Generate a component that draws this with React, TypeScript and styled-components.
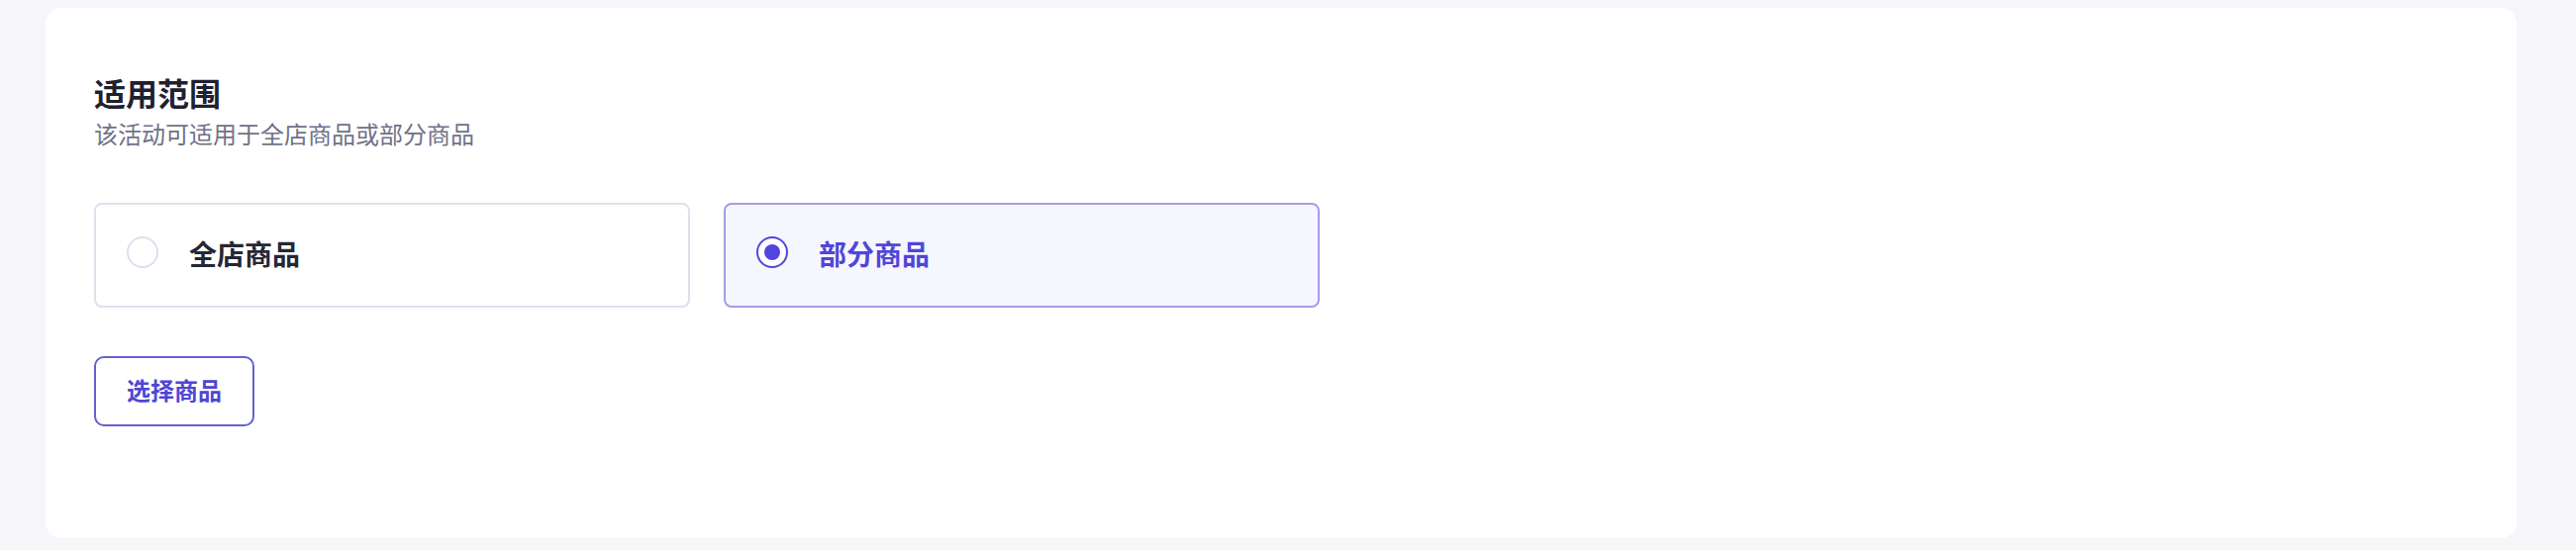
import { useState } from 'react'
import styled, { createGlobalStyle } from 'styled-components'

const GlobalStyle = createGlobalStyle`
  html, body {
    margin: 0;
    padding: 0;
    background: #f6f6fa;
  }
  body {
    font-family: Inter, "Noto Sans CJK SC", "Noto Sans", sans-serif;
  }
  * {
    box-sizing: border-box;
  }
`

const Page = styled.div`
  padding: 8px 60px 12px 46px;
`

const Card = styled.section`
  background: #ffffff;
  border-radius: 16px;
  padding: 68px 49px 113px;
`

const Title = styled.h2`
  margin: 0 0 5px;
  font-size: 32px;
  line-height: 40px;
  font-weight: 600;
  color: #1f2130;
`

const Subtitle = styled.p`
  margin: 0;
  font-size: 24px;
  line-height: 32px;
  color: #6f7187;
`

const Options = styled.div`
  display: grid;
  grid-template-columns: 602px 602px;
  gap: 34px;
  margin-top: 52px;
`

const Option = styled.button<{ $active: boolean }>`
  display: flex;
  align-items: center;
  gap: 31px;
  height: 106px;
  padding: 0 31px;
  border: 2px solid ${(p) => (p.$active ? '#a19de9' : '#dfe0ec')};
  border-radius: 8px;
  background: ${(p) => (p.$active ? '#f6f6ff' : '#ffffff')};
  font-family: inherit;
  font-size: 28px;
  line-height: 36px;
  font-weight: 600;
  color: ${(p) => (p.$active ? '#4f46d8' : '#252733')};
  cursor: pointer;
  text-align: left;
`

const Radio = styled.span<{ $active: boolean }>`
  display: flex;
  align-items: center;
  justify-content: center;
  flex: none;
  width: 32px;
  height: 32px;
  margin-top: -6px;
  border-radius: 50%;
  border: 2px solid ${(p) => (p.$active ? '#4f46d8' : '#dde0ec')};
  background: #ffffff;
  &::after {
    content: '';
    display: ${(p) => (p.$active ? 'block' : 'none')};
    width: 16px;
    height: 16px;
    border-radius: 50%;
    background: #4f46e0;
  }
`

const PickButton = styled.button`
  margin-top: 49px;
  height: 71px;
  padding: 0 31px;
  border: 2px solid #6660cf;
  border-radius: 10px;
  background: #ffffff;
  font-family: inherit;
  font-size: 24px;
  line-height: 67px;
  font-weight: 600;
  color: #4f46d2;
  cursor: pointer;
`

const scopes = [
  { key: 'all', label: '全店商品' },
  { key: 'part', label: '部分商品' },
]

export default function App() {
  const [scope, setScope] = useState('part')

  return (
    <Page>
      <GlobalStyle />
      <Card>
        <Title>适用范围</Title>
        <Subtitle>该活动可适用于全店商品或部分商品</Subtitle>
        <Options>
          {scopes.map((s) => (
            <Option key={s.key} $active={scope === s.key} onClick={() => setScope(s.key)}>
              <Radio $active={scope === s.key} />
              {s.label}
            </Option>
          ))}
        </Options>
        {scope === 'part' && <PickButton>选择商品</PickButton>}
      </Card>
    </Page>
  )
}
